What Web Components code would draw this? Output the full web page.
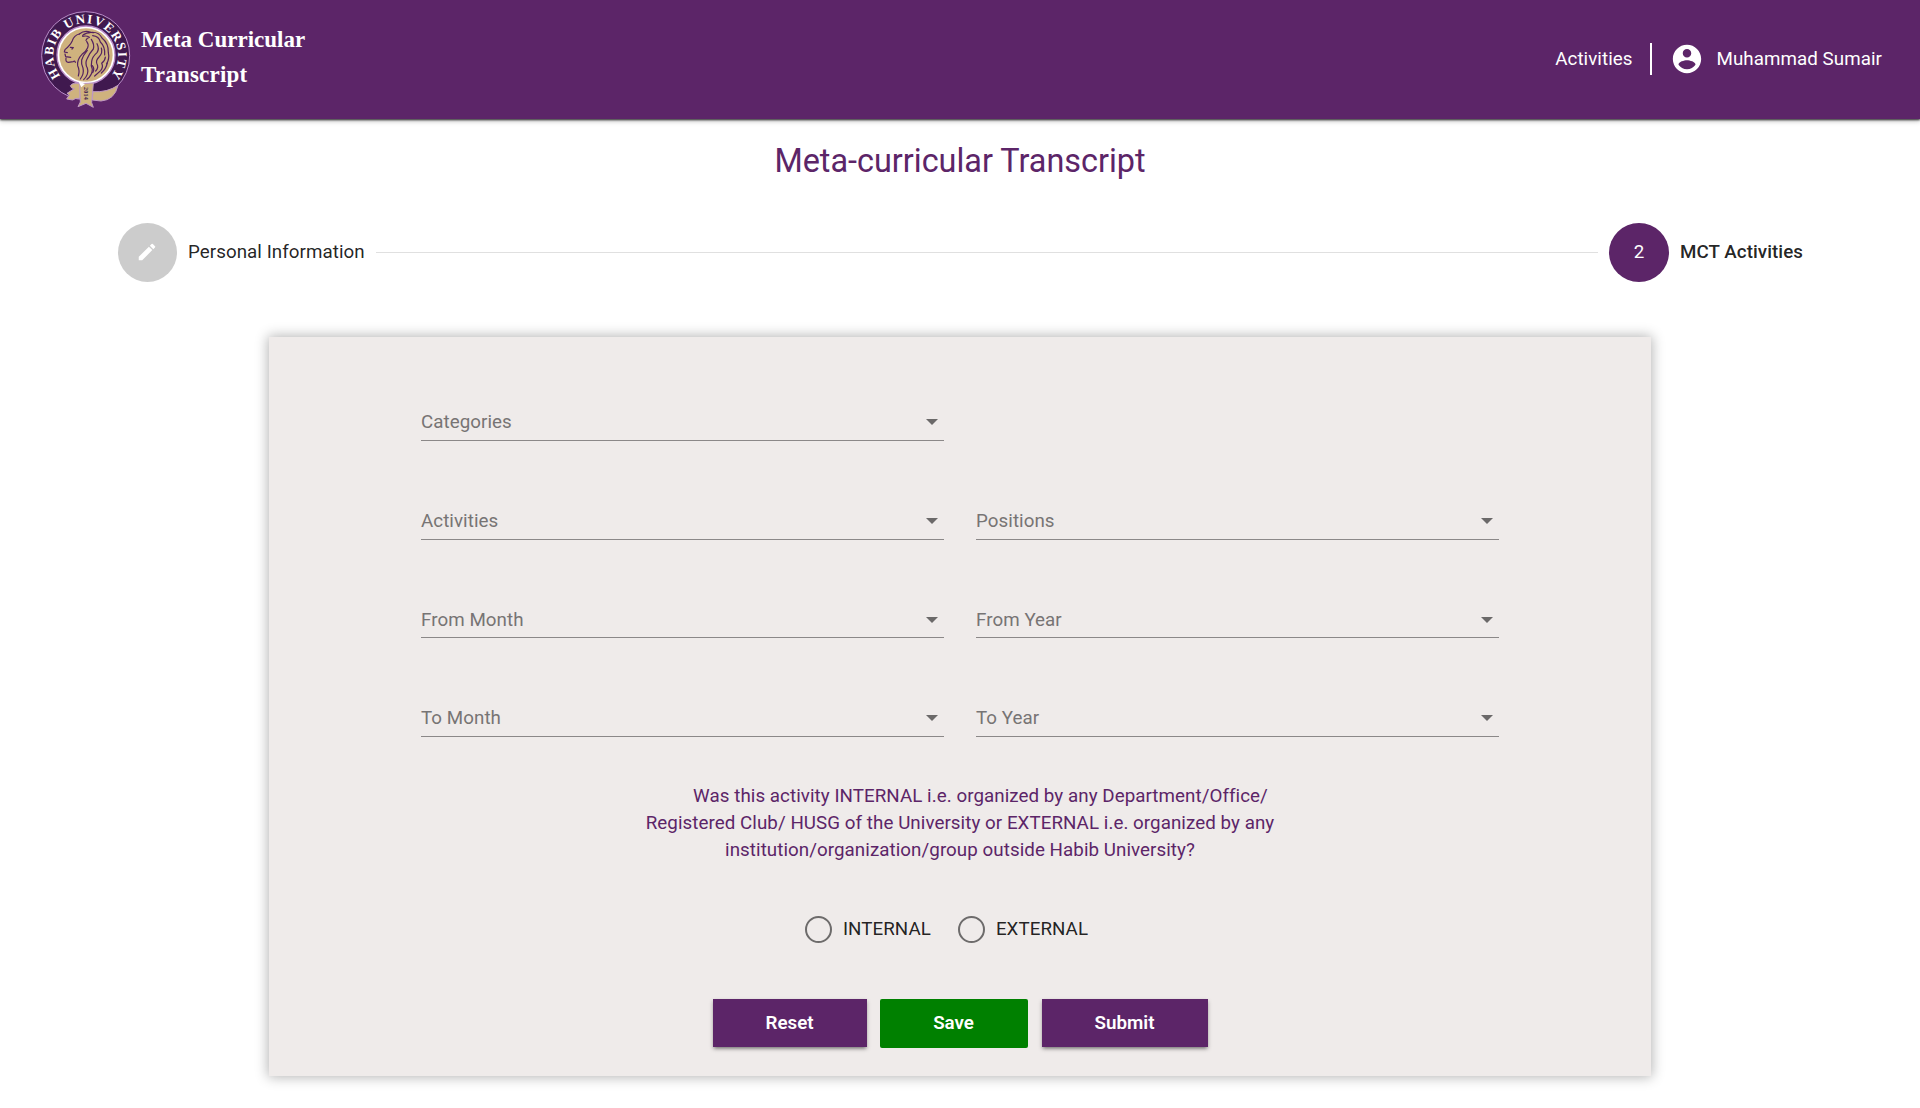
<!DOCTYPE html>
<html lang="en">
<head>
<meta charset="utf-8">
<title>Meta Curricular Transcript</title>
<style>
html,body{margin:0;background:#fff}
body{font:400 18.75px/27px Roboto,sans-serif;letter-spacing:.06px;color:rgba(0,0,0,.87);--purple:#5c2568;height:1108px;overflow:hidden}
</style>
</head>
<body>
<mct-app></mct-app>
<script>
const define = (name, html) => {
  const t = document.createElement('template');
  t.innerHTML = html;
  customElements.define(name, class extends HTMLElement {
    constructor() {
      super();
      this.attachShadow({ mode: 'open' }).append(t.content.cloneNode(true));
    }
  });
};

define('mct-logo', `
<style>:host{display:block;width:91px;height:99px;letter-spacing:0}svg{display:block}</style>
<svg width="91" height="99" viewBox="30 30 273 297">
  <circle cx="167" cy="167" r="132" fill="#40194f" stroke="#b98cc8" stroke-width="3"/>
  <circle cx="168" cy="165" r="87" fill="#fff" stroke="#b98cc8" stroke-width="4"/>
  <circle cx="168" cy="165" r="80" fill="#cfb27e"/>
  <path id="arc" d="M91.6 228A97 97 0 1 1 242.4 228" fill="none"/>
  <text font-family="Liberation Serif,serif" font-weight="700" font-size="39" fill="#fff"><textPath href="#arc" textLength="436" lengthAdjust="spacing">HABIB UNIVERSITY</textPath></text>
  <g fill="none" stroke="#542260" stroke-width="3.6" stroke-linecap="round" stroke-linejoin="round">
    <path d="M148 102Q132 106 127 122Q122 134 105 149L103 156L112 158M105 162L107 170L122 172M108 174Q106 187 115 187L130 185Q134 181 136 187"/>
    <path d="M121 142L130 143L126 147M148 102Q163 90 182 97Q165 99 158 106Q174 94 191 98"/>
    <path d="M158 109Q170 106 178 112Q171 113 168 121"/>
    <path d="M176 98Q205 92 216 114Q236 130 235 158Q239 176 230 192"/>
    <path d="M188 107Q207 109 211 126Q226 140 224 165"/>
    <path d="M170 124Q177 133 173 143Q168 155 156 163Q141 178 143 197Q150 211 145 228"/>
    <path d="M172 151Q159 166 155 180Q153 192 159 204Q163 221 151 237"/>
    <path d="M184 118Q194 134 190 147Q178 160 171 177Q164 190 172 204Q178 222 161 239"/>
    <path d="M201 131Q209 146 201 158Q187 170 185 184Q182 197 187 208Q187 226 171 238"/>
    <path d="M214 144Q219 158 207 171Q196 182 201 192Q207 202 197 213M226 171Q226 181 215 190Q221 201 212 212L194 228"/>
    <path d="M232 188Q229 206 214 219M187 197Q195 206 188 218"/>
  </g>
  <g fill="#cfb27e" stroke="#c09ac4" stroke-width="3" stroke-linejoin="round">
    <path d="M189 275Q231 278 264 256Q254 300 213 303L187 300Z"/>
    <path d="M151 252Q129 246 121 257Q123 266 133 266L111 280L118 285L110 297L128 300Q136 293 150 295Z"/>
    <path d="M149 251L190 249L185 308L190 322L168 310L144 320L151 306Z"/>
  </g>
  <path d="M145 244L165 252L154 262Z" fill="#fff"/>
  <text transform="translate(162 261) rotate(90)" font-family="Liberation Serif,serif" font-weight="700" font-size="18" textLength="38" fill="#40194f">2014</text>
</svg>`);

define('mct-header', `
<style>
:host{display:flex;box-sizing:border-box;height:119px;background:var(--purple);color:#fff;box-shadow:0 1px 2px rgba(0,0,0,.8),0 2px 5px rgba(0,0,0,.25);padding:10px 38px 0 40px;justify-content:space-between;position:relative}
.brand{display:flex;gap:10px}
.name{font:700 23px/35px "Liberation Serif",serif;letter-spacing:0;padding-top:12px}
nav{display:flex;align-items:center;height:98px}
i{width:2px;height:32px;background:#fff;margin:0 18px 0 17px}
svg{width:34px;height:34px;margin-right:13px}
</style>
<div class="brand"><mct-logo></mct-logo><div class="name">Meta Curricular<br><span style="letter-spacing:.2px">Transcript</span></div></div>
<nav><span>Activities</span><i></i>
<svg viewBox="0 0 24 24" fill="#fff"><path d="M12 2C6.48 2 2 6.48 2 12s4.48 10 10 10 10-4.48 10-10S17.52 2 12 2zm0 3c1.66 0 3 1.34 3 3s-1.34 3-3 3-3-1.34-3-3 1.34-3 3-3zm0 14.2c-2.5 0-4.71-1.28-6-3.22.03-1.99 4-3.08 6-3.08 1.99 0 5.97 1.09 6 3.08-1.29 1.94-3.5 3.22-6 3.22z"/></svg>
<span>Muhammad Sumair</span></nav>`);

define('mct-step', `
<style>
:host{display:flex;align-items:center;gap:11px;white-space:nowrap}
.dot{display:flex;align-items:center;justify-content:center;width:var(--w,59px);height:59px;border-radius:50%;background:var(--dot,#ccc);color:#fff;font-weight:400}
</style>
<span class="dot"><slot name="icon"></slot></span><span><slot></slot></span>`);

define('mct-stepper', `
<style>
:host{display:flex;align-items:center;margin:0 117px 0 118px;height:59px}
hr{flex:1;border:0;height:1px;background:#e0e0e0;margin:0 11px}
.on{--dot:var(--purple);--w:60px;font-weight:500;letter-spacing:.06px}
svg{display:block;width:22px;height:22px;margin:0 1px 2px 0}
</style>
<mct-step><svg slot="icon" viewBox="0 0 24 24" fill="#fff"><path d="M3 17.25V21h3.75L17.81 9.94l-3.75-3.75L3 17.25zM20.71 7.04a1 1 0 0 0 0-1.41l-2.34-2.34a1 1 0 0 0-1.41 0l-1.83 1.83 3.75 3.75 1.83-1.83z"/></svg>Personal Information</mct-step>
<hr>
<mct-step class="on"><span slot="icon">2</span>MCT Activities</mct-step>`);

define('mct-select', `
<style>
:host{display:flex;box-sizing:border-box;height:37px;border-bottom:1px solid #8b8888;color:#777474;justify-content:space-between;align-items:flex-start;padding-right:6px}
span{padding-top:5.4px}
b{width:0;height:0;border:6.5px solid transparent;border-top-color:#6b6969;border-bottom:0;margin-top:15.3px}
</style>
<span><slot></slot></span><b></b>`);

define('mct-radio', `
<style>
:host{display:flex;align-items:center;gap:11px}
i{box-sizing:border-box;width:27px;height:27px;border:2px solid #6d6b6b;border-radius:50%}
</style>
<i></i><span><slot></slot></span>`);

define('mct-button', `
<style>
:host{display:flex;box-sizing:border-box;height:48px;align-items:center;justify-content:center;background:var(--bg,var(--purple));color:#fff;font-weight:600;box-shadow:var(--sh,0 3px 3px -2px rgba(0,0,0,.3),0 2px 4px rgba(0,0,0,.3));letter-spacing:0}
</style><slot></slot>`);

define('mct-card', `
<style>
:host{display:flex;flex-direction:column;align-items:center;box-sizing:border-box;width:1382px;height:739px;margin:0 auto;background:#efebea;box-shadow:0 0 12px 1px rgba(0,0,0,.3);padding-top:66.8px}
.grid{display:grid;grid-template-columns:523px 523px;column-gap:32px;grid-auto-rows:37px;row-gap:61.75px}
.q{margin:46px 0 0;text-align:center;color:var(--purple);white-space:pre;font-size:18.75px;letter-spacing:.06px;line-height:27px}
.q span{padding-left:41px}
.radios{display:flex;gap:27px;margin:52px 27px 0 0}
.buttons{display:flex;margin-top:56.4px}
</style>
<div class="grid">
<mct-select>Categories</mct-select><span></span>
<mct-select>Activities</mct-select><mct-select>Positions</mct-select>
<mct-select>From Month</mct-select><mct-select>From Year</mct-select>
<mct-select>To Month</mct-select><mct-select>To Year</mct-select>
</div>
<p class="q"><span>Was this activity INTERNAL i.e. organized by any Department/Office/</span>
Registered Club/ HUSG of the University or EXTERNAL i.e. organized by any
institution/organization/group outside Habib University?</p>
<div class="radios"><mct-radio>INTERNAL</mct-radio><mct-radio>EXTERNAL</mct-radio></div>
<div class="buttons"><mct-button style="width:154px;margin-right:13px">Reset</mct-button><mct-button style="width:148px;height:49px;margin-right:14px;border-radius:2px;--bg:#008000;--sh:none">Save</mct-button><mct-button style="width:166px">Submit</mct-button></div>`);

define('mct-app', `
<style>
:host{display:block}
h1{margin:0;padding:23px 0 42px;text-align:center;font-weight:400;font-size:32.4px;letter-spacing:0;line-height:39px;color:var(--purple)}
mct-stepper{margin-bottom:55px}
</style>
<mct-header></mct-header>
<h1>Meta-curricular Transcript</h1>
<mct-stepper></mct-stepper>
<mct-card></mct-card>`);
</script>
</body>
</html>
